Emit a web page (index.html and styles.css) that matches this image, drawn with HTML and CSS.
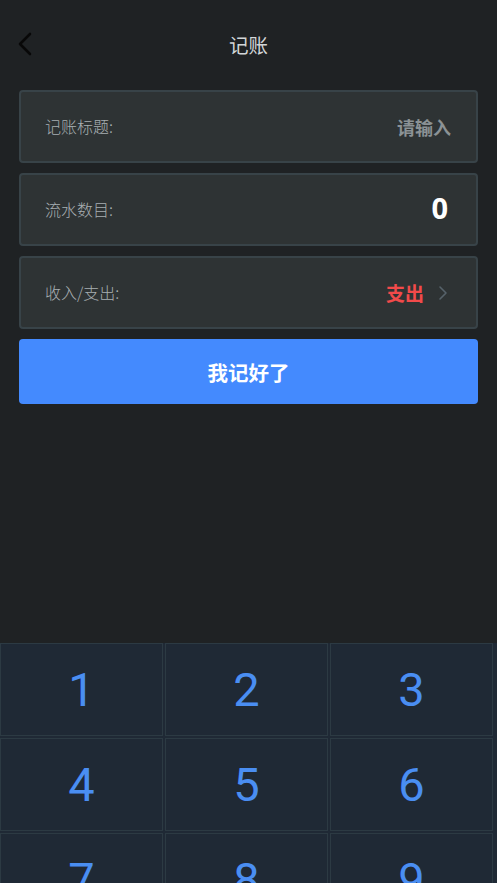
FILE: index.html
```html
<!DOCTYPE html>
<html>
<head>
  <meta charset="utf-8">
  <title>记账</title>
  <link rel="stylesheet" href="styles.css">
</head>
<body>
  <div class="page">
    <div class="header">
      <a class="back">
        <svg width="16" height="24" viewBox="0 0 16 24">
          <path d="M13 2 L3 12 L13 22" fill="none" stroke="#080808" stroke-width="2.6" stroke-linecap="round" stroke-linejoin="round"/>
        </svg>
      </a>
      <h1>记账</h1>
    </div>

    <div class="form">
      <div class="field">
        <span class="label">记账标题:</span>
        <span class="placeholder">请输入</span>
      </div>
      <div class="field">
        <span class="label">流水数目:</span>
        <span class="amount">0</span>
      </div>
      <div class="field">
        <span class="label">收入/支出:</span>
        <span class="picker">
          <span class="expense">支出</span>
          <svg width="10" height="16" viewBox="0 0 10 16">
            <path d="M2 2 L8 8 L2 14" fill="none" stroke="#56626a" stroke-width="1.6" stroke-linecap="round" stroke-linejoin="round"/>
          </svg>
        </span>
      </div>
      <button class="submit">我记好了</button>
    </div>
  </div>

  <div class="keypad">
    <div class="key">1</div>
    <div class="key">2</div>
    <div class="key">3</div>
    <div class="key">4</div>
    <div class="key">5</div>
    <div class="key">6</div>
    <div class="key">7</div>
    <div class="key">8</div>
    <div class="key">9</div>
    <div class="key">.</div>
    <div class="key">0</div>
    <div class="key">⌫</div>
  </div>
</body>
</html>
```

FILE: styles.css
```css
html, body {
  margin: 0;
  padding: 0;
  height: 883px;
  overflow: hidden;
}

body {
  font-family: "Noto Sans CJK SC", "Noto Sans", sans-serif;
  background-color: #1f2224;
}

.page {
  height: 643px;
}

.header {
  height: 88px;
  display: flex;
  align-items: center;
  justify-content: center;
  position: relative;
}

.back {
  position: absolute;
  left: 17px;
  top: 32px;
  display: flex;
}

.header h1 {
  margin: 0;
  font-size: 19.5px;
  font-weight: 400;
  color: #d2d6d8;
}

.form {
  padding: 2px 19px 0;
  display: flex;
  flex-direction: column;
  gap: 10px;
}

.field {
  height: 69px;
  box-sizing: content-box;
  border: 2px solid #384348;
  border-radius: 4px;
  background-color: #2e3334;
  display: flex;
  align-items: center;
  justify-content: space-between;
  padding: 0 24px;
}

.label {
  font-size: 16px;
  font-weight: 300;
  color: #a8afb2;
  margin-top: -2px;
}

.placeholder {
  font-size: 18px;
  font-weight: 700;
  color: #8b9295;
  margin-right: 1px;
}

.amount {
  font-family: "Noto Sans", sans-serif;
  font-size: 29px;
  font-weight: 700;
  color: #ffffff;
  margin-right: 4px;
  margin-top: -4px;
}

.picker {
  display: flex;
  align-items: center;
  gap: 14px;
  margin-right: 4px;
}

.expense {
  font-size: 19px;
  font-weight: 700;
  color: #f24a4a;
}

.submit {
  height: 65px;
  border: none;
  border-radius: 4px;
  background-color: #448afe;
  color: #ffffff;
  font-family: inherit;
  font-size: 20.5px;
  font-weight: 700;
}

.keypad {
  background-color: #1f2935;
  display: grid;
  grid-template-columns: 163px 163px 163px;
  grid-auto-rows: 93px;
  gap: 2px;
}

.key {
  box-sizing: border-box;
  border: 1px solid #2c3a43;
  display: flex;
  align-items: center;
  justify-content: center;
  font-family: Roboto, sans-serif;
  font-size: 47px;
  font-weight: 400;
  color: #4a8ef2;
}
```
